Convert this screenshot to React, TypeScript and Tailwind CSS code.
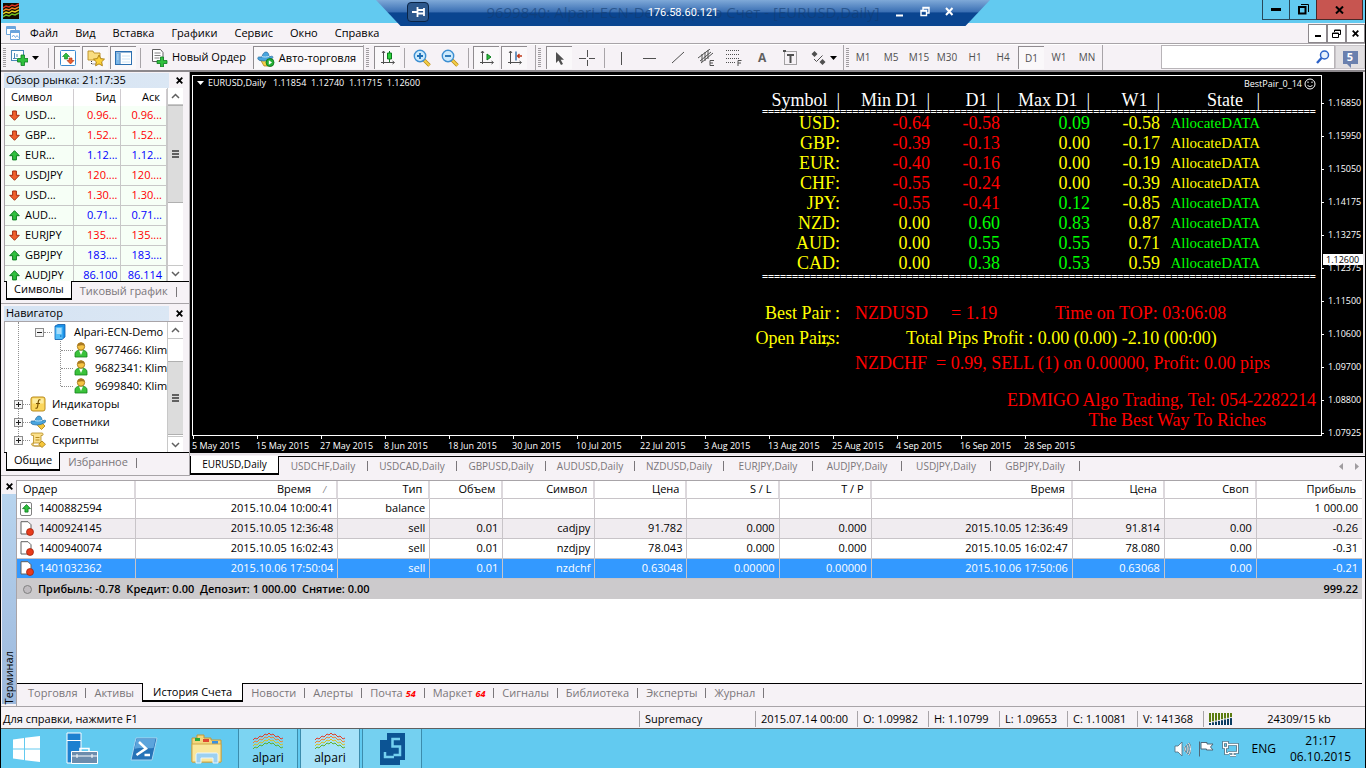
import type { ReactNode } from "react";
import clsx from "clsx";

const menu = ["Файл", "Вид", "Вставка", "Графики", "Сервис", "Окно", "Справка"];
const frames = ["M1", "M5", "M15", "M30", "H1", "H4", "D1", "W1", "MN"];

const quotes = [
  { name: "USD...", bid: "0.96...", ask: "0.96...", up: false },
  { name: "GBP...", bid: "1.52...", ask: "1.52...", up: false },
  { name: "EUR...", bid: "1.12...", ask: "1.12...", up: true },
  { name: "USDJPY", bid: "120....", ask: "120....", up: false },
  { name: "USD...", bid: "1.30...", ask: "1.30...", up: false },
  { name: "AUD...", bid: "0.71...", ask: "0.71...", up: true },
  { name: "EURJPY", bid: "135....", ask: "135....", up: false },
  { name: "GBPJPY", bid: "183....", ask: "183....", up: true },
  { name: "AUDJPY", bid: "86.100", ask: "86.114", up: true },
];

const accounts = ["9677466: Klimenko", "9682341: Klimenko", "9699840: Klimenko"];

const Y = "text-[#ffff00]";
const R = "text-[#ff0000]";
const G = "text-[#00ff00]";

const pairs = [
  { s: "USD:", min: "-0.64", minC: R, d: "-0.58", dC: R, max: "0.09", maxC: G, w: "-0.58", st: G },
  { s: "GBP:", min: "-0.39", minC: R, d: "-0.13", dC: R, max: "0.00", maxC: Y, w: "-0.17", st: Y },
  { s: "EUR:", min: "-0.40", minC: R, d: "-0.16", dC: R, max: "0.00", maxC: Y, w: "-0.19", st: Y },
  { s: "CHF:", min: "-0.55", minC: R, d: "-0.24", dC: R, max: "0.00", maxC: Y, w: "-0.39", st: Y },
  { s: "JPY:", min: "-0.55", minC: R, d: "-0.41", dC: R, max: "0.12", maxC: G, w: "-0.85", st: G },
  { s: "NZD:", min: "0.00", minC: Y, d: "0.60", dC: G, max: "0.83", maxC: G, w: "0.87", st: G },
  { s: "AUD:", min: "0.00", minC: Y, d: "0.55", dC: G, max: "0.55", maxC: G, w: "0.71", st: G },
  { s: "CAD:", min: "0.00", minC: Y, d: "0.38", dC: G, max: "0.53", maxC: G, w: "0.59", st: G },
];

const prices = [
  "1.16850", "1.15950", "1.15050", "1.14175", "1.13275", "1.12375",
  "1.11500", "1.10600", "1.09700", "1.08800", "1.07925",
];

const dates = [
  "5 May 2015", "15 May 2015", "27 May 2015", "8 Jun 2015", "18 Jun 2015", "30 Jun 2015", "10 Jul 2015",
  "22 Jul 2015", "3 Aug 2015", "13 Aug 2015", "25 Aug 2015", "4 Sep 2015", "16 Sep 2015", "28 Sep 2015",
];

const chartTabs = [
  "EURUSD,Daily", "USDCHF,Daily", "USDCAD,Daily", "GBPUSD,Daily", "AUDUSD,Daily",
  "NZDUSD,Daily", "EURJPY,Daily", "AUDJPY,Daily", "USDJPY,Daily", "GBPJPY,Daily",
];

const orderCols = [
  { label: "Ордер", w: "w-[119px]" },
  { label: "Время", w: "w-[202px]" },
  { label: "Тип", w: "w-[92px]" },
  { label: "Объем", w: "w-[73px]" },
  { label: "Символ", w: "w-[92px]" },
  { label: "Цена", w: "w-[92px]" },
  { label: "S / L", w: "w-[92px]" },
  { label: "T / P", w: "w-[92px]" },
  { label: "Время", w: "w-[201px]" },
  { label: "Цена", w: "w-[92px]" },
  { label: "Своп", w: "w-[92px]" },
  { label: "Прибыль", w: "w-[105px]" },
];

const orders = [
  ["1400882594", "2015.10.04 10:00:41", "balance", "", "", "", "", "", "", "", "", "1 000.00"],
  ["1400924145", "2015.10.05 12:36:48", "sell", "0.01", "cadjpy", "91.782", "0.000", "0.000", "2015.10.05 12:36:49", "91.814", "0.00", "-0.26"],
  ["1400940074", "2015.10.05 16:02:43", "sell", "0.01", "nzdjpy", "78.043", "0.000", "0.000", "2015.10.05 16:02:47", "78.080", "0.00", "-0.31"],
  ["1401032362", "2015.10.06 17:50:04", "sell", "0.01", "nzdchf", "0.63048", "0.00000", "0.00000", "2015.10.06 17:50:06", "0.63068", "0.00", "-0.21"],
];

const terminalTabs: { label: string; badge?: string }[] = [
  { label: "Торговля" },
  { label: "Активы" },
  { label: "История Счета" },
  { label: "Новости" },
  { label: "Алерты" },
  { label: "Почта", badge: "54" },
  { label: "Маркет", badge: "64" },
  { label: "Сигналы" },
  { label: "Библиотека" },
  { label: "Эксперты" },
  { label: "Журнал" },
];

function Grip() {
  return (
    <svg width="3" height="20" className="shrink-0" aria-hidden>
      {Array.from({ length: 10 }, (_, i) => (
        <rect key={i} y={i * 2} width="3" height="1" fill="#a09ca0" />
      ))}
    </svg>
  );
}

function Sep() {
  return <div className="mx-1 h-5 w-px shrink-0 bg-[#a8a4a8]" />;
}

function Tool({ label, active, wide, children }: { label: string; active?: boolean; wide?: boolean; children: ReactNode }) {
  return (
    <button
      aria-label={label}
      className={clsx(
        "flex h-[23px] shrink-0 items-center justify-center",
        wide ? "w-[38px]" : "w-[26px]",
        active && "border-t border-l border-[#908c90] bg-[#faf8fa]",
      )}
    >
      {children}
    </button>
  );
}

function Close() {
  return (
    <svg width="7" height="7" viewBox="0 0 7 7" stroke="#000" strokeWidth="1.8">
      <path d="M.7.7l5.6 5.6M6.3.7L.7 6.3" />
    </svg>
  );
}

function Chevron({ down }: { down?: boolean }) {
  return (
    <svg width="9" height="6" viewBox="0 0 9 6" fill="none" stroke="#606060" strokeWidth="1.5">
      <path d={down ? "M1 1l3.5 3.5L8 1" : "M1 5l3.5-3.5L8 5"} />
    </svg>
  );
}

function Scrollbar({ before, thumb }: { before: string; thumb: string }) {
  return (
    <div className="flex w-4 shrink-0 flex-col border-l border-[#c8c8c8] bg-white">
      <button aria-label="Scroll up" className="flex h-[17px] shrink-0 items-center justify-center border-b border-[#c8c8c8]">
        <Chevron />
      </button>
      <div className={before} />
      <div className={clsx("flex flex-col items-center justify-center gap-px border-y border-[#b0b0b0] bg-[#dcdcdc]", thumb)}>
        {[0, 1, 2].map((i) => (
          <div key={i} className="h-0.5 w-[7px] bg-[#606060]" />
        ))}
      </div>
      <div className="flex-1" />
      <button aria-label="Scroll down" className="flex h-4 shrink-0 items-center justify-center border-t border-[#c8c8c8]">
        <Chevron down />
      </button>
    </div>
  );
}

function Arrow({ up, size = 11 }: { up: boolean; size?: number }) {
  return (
    <svg width={size} height={size} viewBox="0 0 11 11" className="shrink-0">
      {up ? (
        <path d="M5.5.7l4.8 5H7.4v4.2H3.6V5.700H.7z" fill="#2fc03c" stroke="#0b7a1e" />
      ) : (
        <path d="M5.5 10.300l4.800-5H7.400V1H3.600v4.300H.7z" fill="#f0602c" stroke="#a52c10" />
      )}
    </svg>
  );
}

function PanelTitle({ children }: { children: ReactNode }) {
  return (
    <div className="flex h-[16px] items-center">
      <h2 className="flex h-[15px] flex-1 items-center bg-linear-to-r from-[#d5e3f3] to-[#dbe7f4] pl-0.5 text-[11px] whitespace-nowrap">{children}</h2>
      <button aria-label="Закрыть" className="flex w-[20px] justify-center">
        <Close />
      </button>
    </div>
  );
}

function PanelTabs({ active, other }: { active: string; other: string }) {
  return (
    <div className="flex h-5 border-t border-black pl-0.5 text-[11px]">
      <button className="-mt-px h-[19px] border-x border-b-2 border-black bg-white px-[7px] text-black">{active}</button>
      <div className="flex items-center">
        <button className="px-2 text-[#7a767a]">{other}</button>
        <div className="h-2.5 w-px bg-[#7a767a]" />
      </div>
    </div>
  );
}

function Hat() {
  return (
    <>
      <path d="M2 7c-2 0-1.500 3 1 3.500 4 1 8 .5 12-2 1.500-1 1-2.500-.5-2.300L12 7c0-3-1-5-3-5S5.500 4 5 7z" fill="#4aa5de" stroke="#22689c" strokeWidth=".7" />
      <path d="M5 6.500c2 .8 5 .6 7-.2" stroke="#bfe4f8" fill="none" />
    </>
  );
}

function TreeIcon({ kind }: { kind: "server" | "user" | "fx" | "hat" | "script" }) {
  return (
    <svg width="16" height="16" viewBox="0 0 16 16" className="shrink-0">
      {kind === "server" && (
        <>
          <path d="M3 2l3-1.500h7V13l-3 2.500H3z" fill="#1c92e8" stroke="#0c5ba8" strokeWidth=".8" />
          <path d="M3.500 3h7v12h-7z" fill="#52bdf8" />
          <path d="M4.500 5h5M4.500 7h5M4.500 9h5" stroke="#fff" />
          <path d="M8 12h1.500" stroke="#0c5ba8" />
        </>
      )}
      {kind === "user" && (
        <>
          <path d="M2 15V12c0-3 3-4 6-4s6 1 6 4v3z" fill="#3bc23b" stroke="#13811b" strokeWidth=".8" />
          <path d="M6 8.500l2 4.500 2-4.500z" fill="#fff" />
          <circle cx="8" cy="4.500" r="3.700" fill="#f6c444" stroke="#9a6b10" strokeWidth=".8" />
          <path d="M4.500 4C5 1.500 6 .6 8 .6S11.500 2 11.600 4C10 2.500 7 4 4.500 4z" fill="#a87820" />
        </>
      )}
      {kind === "fx" && (
        <>
          <rect x="1" y="1" width="14" height="14" rx="2" fill="#fbd65c" stroke="#b98a1d" />
          <rect x="2.500" y="2.500" width="11" height="5" fill="#fdeca0" />
          <path d="M10.500 4C8.500 3 8.300 5 8 8s-.7 5-2.500 4M6 7.500h4" fill="none" stroke="#7a5200" strokeWidth="1.200" />
        </>
      )}
      {kind === "hat" && (
        <>
          <path d="M11 8l4 4-3.500 3.500-4-4z" fill="#f5c63a" stroke="#a87c14" strokeWidth=".8" />
          <Hat />
        </>
      )}
      {kind === "script" && (
        <>
          <path d="M2 1h10c1.500 0 1.500 2.500 0 2.500h-1V11H5c-3 0-2 3 0 3h6H4c-3 0-3-3-1-3h.5V3.500H2C.7 3.500.7 1 2 1z" fill="#fbe08a" stroke="#b58a20" strokeWidth=".8" />
          <path d="M5.500 5.500h4M5.500 8h4" stroke="#b58a20" />
          <path d="M12 9l3.500 3.300L12 15.500l-3.300-3.200z" fill="#f5c63a" stroke="#a87c14" strokeWidth=".8" />
        </>
      )}
    </svg>
  );
}

function Expander({ open }: { open?: boolean }) {
  return (
    <svg width="9" height="9" viewBox="0 0 9 9" className="relative shrink-0">
      <rect x=".5" y=".5" width="8" height="8" fill="#f4f4f4" stroke="#8c8c8c" />
      <path d={open ? "M2 4.500h5" : "M2 4.500h5M4.500 2v5"} stroke="#202020" />
    </svg>
  );
}

function Dash({ w }: { w: string }) {
  return <div className={clsx("h-0 shrink-0 border-t border-dotted border-[#909090]", w)} />;
}

function TitleBar() {
  return (
    <header className="relative flex h-[23px] shrink-0 items-start justify-between bg-[#62caf0]">
      <svg width="16" height="16" viewBox="0 0 16 16" className="mt-[3px] ml-0.5">
        <rect width="16" height="16" fill="#140c00" />
        <g fill="none" strokeWidth="1.500">
          <path d="M0 5l3-2 3 1 3-2 3 1 4-2" stroke="#e03020" />
          <path d="M0 8l3-2 3 1 3-2 3 1 4-2" stroke="#f08020" />
          <path d="M0 11l3-2 3 1 3-2 3 1 4-2" stroke="#e8d020" />
          <path d="M0 14l3-2 3 1 3-2 3 1 4-2" stroke="#70c020" />
        </g>
      </svg>
      <div className="absolute inset-x-0 top-0 z-10 flex justify-center">
        <div className="relative flex h-[26px] w-[614px] items-start bg-linear-to-b from-[#7fa9d8] via-[#3b70b4] via-45% to-[#0a4590] to-50% [clip-path:polygon(0_0,100%_0,96%_100%,4%_100%)]">
          <button aria-label="Закрепить" className="mt-0.5 ml-[31px] flex h-5 w-[22px] items-center justify-center rounded-sm border border-[#0a2446] bg-[#2c578c]">
            <svg width="13" height="10" viewBox="0 0 13 10" stroke="#fff" strokeWidth="1.800" fill="none">
              <path d="M0 5h5M5.500 0v10M6 3h6M6 6.500h6M12 1v8" />
            </svg>
          </button>
          <p className="absolute inset-x-0 top-0 text-center text-[15px] leading-6 whitespace-nowrap text-[#123c70]/60">
            9699840: Alpari-ECN-Demo: Демо Счет - [EURUSD,Daily]
          </p>
          <p className="absolute inset-x-0 top-0 text-center font-['Roboto'] text-[11px] leading-[25px] text-white">176.58.60.121</p>
          <div className="mt-[5px] ml-auto flex gap-[15px] pr-[36px] text-white">
            <svg width="10" height="14" aria-hidden><path d="M1 10.500h7" stroke="#fff" strokeWidth="2" /></svg>
            <svg width="10" height="14" viewBox="0 0 10 14" fill="none" stroke="#fff" strokeWidth="1.400">
              <path d="M3 5V2.500h6V8H7M1 5.500h5.500v5H1zM1 6h5.500M3 3h6" />
            </svg>
            <svg width="9" height="14" viewBox="0 0 9 14" stroke="#fff" strokeWidth="2"><path d="M1 3l6.500 7M7.500 3L1 10" /></svg>
          </div>
        </div>
      </div>
      <div className="mr-0.5 flex h-5">
        <button aria-label="Свернуть" className="flex w-7 items-center justify-center border border-t-0 border-[#28485a]">
          <span className="h-[3px] w-2.5 bg-black" />
        </button>
        <button aria-label="Развернуть" className="flex w-[26px] items-center justify-center border-b border-[#28485a]">
          <svg width="11" height="11" viewBox="0 0 11 11" fill="none" stroke="#000">
            <path d="M1 3h6.500v6.500H1z" strokeWidth="2" />
            <path d="M3 .5h7.500V8" />
          </svg>
        </button>
        <button aria-label="Закрыть" className="flex w-[47px] items-center justify-center border border-t-0 border-[#4a2828] bg-[#c75550]">
          <svg width="9" height="8" viewBox="0 0 9 8" stroke="#000" strokeWidth="2"><path d="M1 .5l7 7M8 .5l-7 7" /></svg>
        </button>
      </div>
    </header>
  );
}

function MenuBar() {
  const box = "flex h-[19px] w-[19px] items-center justify-center border border-[#8c888c] bg-white";
  return (
    <nav className="flex h-[21px] shrink-0 items-center border-b border-[#a8a4a8] text-[11px]">
      <svg width="16" height="16" viewBox="0 0 16 16" fill="#fff" stroke="#6aa4dc" className="mr-[9px] ml-1">
        <path d="M1.500 1.500h9v8h-9z" />
        <path d="M1.500 3h9" strokeWidth="2" />
        <path d="M5.500 5.500h9v9h-9z" />
        <path d="M5.500 7h9" strokeWidth="2" />
        <path d="M7 12l1.500-2 2 2.500 1.500-2 1.500 2" fill="none" strokeWidth=".9" />
      </svg>
      <div className="flex gap-[17px]">
        {menu.map((m) => (
          <button key={m}>{m}</button>
        ))}
      </div>
      <div className="ml-auto flex">
        <button aria-label="Свернуть окно" className={box}><span className="mt-1.5 h-0.5 w-1.5 bg-black" /></button>
        <button aria-label="Восстановить окно" className={box}>
          <svg width="9" height="9" viewBox="0 0 9 9" fill="none" stroke="#000"><path d="M2.500 3V1h6v4.500H7M.5 4h6v4.500h-6zM.5 4.500h6M2.500 1.500h6" /></svg>
        </button>
        <button aria-label="Закрыть окно" className={box}><Close /></button>
      </div>
    </nav>
  );
}

function Axes({ children }: { children: ReactNode }) {
  return (
    <svg width="16" height="16" viewBox="0 0 16 16" fill="none" stroke="#505050">
      <path d="M3.500 1v13M1 12.500h13M2 3l1.500-2L5 3M12.500 11l2 1.500-2 1.500" />
      {children}
    </svg>
  );
}

function Lens({ plus }: { plus?: boolean }) {
  return (
    <svg width="18" height="18" viewBox="0 0 18 18">
      <path d="M11 11l5.500 5.500" stroke="#b88a18" strokeWidth="3.500" />
      <path d="M11 11l5.500 5.500" stroke="#f5cf48" strokeWidth="2" />
      <circle cx="7" cy="7" r="5.700" fill="#cdeafc" stroke="#3c8fd2" strokeWidth="1.400" />
      <path d={plus ? "M4 7h6M7 4v6" : "M4 7h6"} stroke="#1f6fb5" strokeWidth="1.800" />
    </svg>
  );
}

function Caret() {
  return <svg width="7" height="4" className="ml-1"><path d="M0 0h7L3.500 4z" fill="#000" /></svg>;
}

const group = "flex shrink-0 items-center border-r border-[#a8a4a8] pl-0.5";

function ToolBar() {
  return (
    <div className="flex h-[28px] shrink-0 items-stretch border-t border-b-2 border-t-white border-b-[#8c888c] text-[11px]">
      <div className={group}>
        <Grip />
        <Tool label="Новый график" wide>
          <svg width="17" height="17" viewBox="0 0 17 17">
            <rect x=".5" y="1.500" width="12" height="10" fill="#fff" stroke="#4a88b8" />
            <path d="M3.500 4v5M6 5v3M2 9.500h4" stroke="#4a88b8" />
            <path d="M10 6h3.500v3.500H17v3.500h-3.500v3.500H10V13H6.500V9.500H10z" fill="#2fc03c" stroke="#0b7a1e" strokeWidth=".8" />
          </svg>
          <Caret />
        </Tool>
        <Sep />
        <div className="ml-px flex gap-0.5">
          <Tool label="Обзор рынка" active>
            <svg width="16" height="16" viewBox="0 0 16 16">
              <rect x=".5" y=".5" width="15" height="15" rx="1" fill="#fff" stroke="#3a8ad0" />
              <path d="M6 3l3.500 3.500h-2V9h-3V6.500h-2z" fill="#2fc03c" stroke="#0b7a1e" strokeWidth=".6" />
              <path d="M10.500 14L7 10.500h2V8h3v2.500h2z" fill="#f0602c" stroke="#a52c10" strokeWidth=".6" />
            </svg>
          </Tool>
          <Tool label="Навигатор" active>
            <svg width="18" height="18" viewBox="0 0 18 18">
              <path d="M1 2h5l1 2h6v7H1z" fill="#f9dd80" stroke="#b98d22" strokeWidth=".9" />
              <path d="M4.500 12v3h4" fill="none" stroke="#404040" strokeDasharray="1 1" />
              <path d="M12 6l1.700 3.600 3.800.5-2.800 2.700.7 4L12 14.900l-3.400 1.900.7-4-2.800-2.700 3.800-.5z" fill="#fbd038" stroke="#a87a10" strokeWidth=".9" />
            </svg>
          </Tool>
          <Tool label="Терминал" active>
            <svg width="17" height="16" viewBox="0 0 17 16">
              <rect x=".5" y="1.500" width="16" height="13" fill="#fff" stroke="#2c6fb0" />
              <path d="M1 2h15" stroke="#2c6fb0" />
              <path d="M1 3h3.500v11H1z" fill="#79b6e8" />
              <path d="M5 3v11" stroke="#2c6fb0" />
              <path d="M2 5h1.500M2 7h1.500M2 9h1.500M7 6h8M7 9h8M7 12h8" stroke="#cfe4f6" />
            </svg>
          </Tool>
        </div>
        <Sep />
        <button className="flex h-[23px] items-center gap-1 pr-[7px] pl-[6px] whitespace-nowrap">
          <svg width="17" height="18" viewBox="0 0 17 18">
            <path d="M1.500.5h8l2.500 3v9H1.500z" fill="#fff" stroke="#606060" />
            <path d="M3.500 4h6M3.500 6.500h6M3.500 9h5" stroke="#808080" />
            <path d="M9.500 8h3v3.500H16v3h-3.500V18h-3v-3.500H6v-3h3.500z" fill="#2fc03c" stroke="#0b7a1e" strokeWidth=".8" />
          </svg>
          Новый Ордер
        </button>
        <button className="flex h-[23px] items-center gap-1 border-t border-l border-[#908c90] bg-[#faf8fa] pr-[7px] pl-[3px] whitespace-nowrap">
          <svg width="18" height="17" viewBox="0 0 18 17">
            <path d="M3 9l4 7h8V8z" fill="#f5cf48" stroke="#a87c14" strokeWidth=".7" />
            <Hat />
            <circle cx="13" cy="12.500" r="4" fill="#24b035" stroke="#0a7018" strokeWidth=".8" />
            <path d="M11.800 10.300l3.200 2.200-3.200 2.200z" fill="#fff" />
          </svg>
          Авто-торговля
        </button>
      </div>
      <div className={clsx(group, "pr-2")}>
        <Grip />
        <div className="w-[5px]" />
        <Tool label="Свечи" active>
          <Axes>
            <path d="M9.500 1v11" stroke="#0b7a1e" />
            <path d="M7.500 3h4v6h-4z" fill="#2fd03c" stroke="#0b7a1e" />
          </Axes>
        </Tool>
        <Sep />
        <Tool label="Увеличить"><Lens plus /></Tool>
        <div className="w-0.5" />
        <Tool label="Уменьшить"><Lens /></Tool>
        <div className="w-px" />
        <Sep />
        <Tool label="Автопрокрутка" active>
          <Axes><path d="M8 4l4 3-4 3z" fill="#2fc03c" stroke="#0b7a1e" /></Axes>
        </Tool>
        <div className="w-0.5" />
        <Tool label="Сдвиг графика" active>
          <Axes>
            <path d="M9 1.500v9" stroke="#2060a0" strokeWidth="1.300" />
            <path d="M15 6h-4M12.500 4L10.500 6l2 2" stroke="#c03818" strokeWidth="1.300" />
          </Axes>
        </Tool>
      </div>
      <div className={group}>
        <Grip />
        <div className="w-[5px]" />
        <Tool label="Курсор" active>
          <svg width="12" height="15"><path d="M2 1v11l2.500-2.500L7 14l2-1-2.300-4.300H10z" fill="#505050" /></svg>
        </Tool>
        <div className="w-0.5" />
        <Tool label="Перекрестие">
          <svg width="16" height="16" stroke="#505050"><path d="M8.500 0v7M8.500 10v6M0 8.500h7M10 8.500h6" /></svg>
        </Tool>
        <Sep />
        <div className="flex gap-0.5">
          <Tool label="Вертикальная линия"><svg width="12" height="14" stroke="#505050"><path d="M5.500 1v13" /></svg></Tool>
          <Tool label="Горизонтальная линия"><svg width="14" height="12" stroke="#505050"><path d="M0 6.500h13" /></svg></Tool>
          <Tool label="Трендовая линия"><svg width="14" height="14" stroke="#505050"><path d="M1 12L13 1" /></svg></Tool>
          <Tool label="Канал">
            <svg width="17" height="17" viewBox="0 0 17 17" stroke="#505050" fill="none">
              <path d="M0 9L12 0M3 14L15 4M2 12l11-9M4 5v8M7 3v9M10 1v9" />
              <path d="M16 11.500h-4v5h4M12 14h3" />
            </svg>
          </Tool>
          <Tool label="Фибоначчи">
            <svg width="16" height="17" viewBox="0 0 16 17" stroke="#505050" fill="none">
              <path d="M0 1.500h14M0 5.500h14M0 9.500h14M0 13.500h9" strokeDasharray="1 1" />
              <path d="M15.500 11.500H12V17M12 14h3" />
            </svg>
          </Tool>
          <Tool label="Текст"><span className="text-[12px] font-bold text-[#606060]">A</span></Tool>
          <Tool label="Метка">
            <svg width="15" height="16" viewBox="0 0 15 16" fill="none" stroke="#505050">
              <rect x="1.500" y="1.500" width="12" height="13" strokeDasharray="1 1" />
              <path d="M4 5h7M7.500 5v8" strokeWidth="2" />
              <path d="M0 1h3" strokeWidth="2" />
            </svg>
          </Tool>
          <Tool label="Стрелки" wide>
            <svg width="15" height="14" viewBox="0 0 15 14" fill="#505050">
              <path d="M3.500 0l3 3-3 3-3-3zM11.500 8l3 3-3 3-3-3z" />
              <path d="M3 8l2.500 2.500 6-6" fill="none" stroke="#505050" />
            </svg>
            <Caret />
          </Tool>
        </div>
      </div>
      <div className={clsx(group, "text-[10px] text-[#505050]")}>
        <Grip />
        <div className="ml-px flex gap-0.5">
          {frames.map((f) => (
            <Tool key={f} label={f} active={f === "D1"}>{f}</Tool>
          ))}
        </div>
        <div className="w-0.5" />
      </div>
      <div className="ml-auto flex h-6 items-center">
        <label className="flex h-6 w-[174px] items-center border border-[#b8b4b8] bg-white">
          <input type="search" aria-label="Поиск" className="min-w-0 flex-1 outline-none" />
          <svg width="14" height="14" viewBox="0 0 14 14" fill="none" stroke="#2c62c8" className="mr-1">
            <circle cx="8.500" cy="5" r="4" strokeWidth="1.500" fill="#e6f0fc" />
            <path d="M5.500 8L1 13" strokeWidth="2.400" />
          </svg>
        </label>
        <button aria-label="Сообщения" className="flex h-6 w-[30px] items-center justify-center border border-[#c8c4c8] bg-[#e2e0e2]">
          <span className="relative flex h-[13px] w-[15px] items-center justify-center bg-[#6a80ae] text-[11px] font-bold text-white after:absolute after:top-full after:left-1 after:border-t-4 after:border-l-4 after:border-t-[#6a80ae] after:border-l-transparent">5</span>
        </button>
      </div>
    </div>
  );
}

function MarketWatch() {
  const head = "border-r border-[#d0ccd0] font-normal";
  const cell = "border-r border-b border-[#c8c8c8] p-0";
  return (
    <section className="flex flex-col pl-[3px]">
      <PanelTitle>Обзор рынка: 21:17:35</PanelTitle>
      <div className="mr-1.5 flex h-[193px] overflow-hidden border-l border-[#a8a4a8] bg-white">
        <div className="flex-1 pt-px">
          <table className="w-full table-fixed border-separate border-spacing-0 text-[11px]">
            <thead>
              <tr className="h-[17px]">
                <th className={clsx(head, "w-[69px] pl-1.5 text-left")}>Символ</th>
                <th className={clsx(head, "pr-1 text-right")}>Бид</th>
                <th className={clsx(head, "pr-1.5 text-right")}>Аск</th>
              </tr>
            </thead>
            <tbody>
              {quotes.map((q, i) => (
                <tr key={i} className={clsx("h-5 bg-[#f6fff6]", q.up ? "text-[#0000ff]" : "text-[#ff0000]")}>
                  <td className={cell}>
                    <div className="flex items-center gap-[5px] pl-1 text-black">
                      <Arrow up={q.up} />
                      {q.name}
                    </div>
                  </td>
                  <td className={clsx(cell, "pr-0.5 text-right")}>{q.bid}</td>
                  <td className={clsx(cell, "pr-1 text-right")}>{q.ask}</td>
                </tr>
              ))}
            </tbody>
          </table>
        </div>
        <Scrollbar before="h-0" thumb="h-[98px]" />
      </div>
      <PanelTabs active="Символы" other="Тиковый график" />
    </section>
  );
}

function Navigator() {
  const row = "relative flex h-[18px] items-center whitespace-nowrap";
  return (
    <section className="flex flex-1 flex-col pl-[3px]">
      <PanelTitle>Навигатор</PanelTitle>
      <div className="mr-1.5 flex h-[131px] border-t border-l border-[#a8a4a8] bg-white">
        <div className="relative flex-1 overflow-hidden pt-px text-[11px]">
          <div className="absolute top-0 left-[13px] h-[120px] border-l border-dotted border-[#909090]" />
          <div className={clsx(row, "pl-[30px]")}>
            <Expander open />
            <Dash w="w-2" />
            <TreeIcon kind="server" />
            <span className="ml-1.5">Alpari-ECN-Demo</span>
          </div>
          <div className="relative">
            <div className="absolute top-0 left-[55px] h-[45px] border-l border-dotted border-[#909090]" />
            {accounts.map((a) => (
              <div key={a} className={clsx(row, "pl-[56px]")}>
                <Dash w="w-3" />
                <TreeIcon kind="user" />
                <span className="ml-1.5">{a}</span>
              </div>
            ))}
          </div>
          {(["fx", "hat", "script"] as const).map((kind, i) => (
            <div key={kind} className={clsx(row, "pl-[9px]")}>
              <Expander />
              <Dash w="w-[7px]" />
              <TreeIcon kind={kind} />
              <span className="ml-1.5">{["Индикаторы", "Советники", "Скрипты"][i]}</span>
            </div>
          ))}
        </div>
        <Scrollbar before="h-[22px]" thumb="h-[74px]" />
      </div>
      <PanelTabs active="Общие" other="Избранное" />
    </section>
  );
}

function Rule() {
  return (
    <div className="-my-1 text-left font-['DejaVu_Sans_Mono'] text-[10px] leading-[11px] text-white">{"=".repeat(92)}</div>
  );
}

function PairTable() {
  return (
    <table className="w-[558px] table-fixed border-separate border-spacing-0 text-[18px] leading-5">
      <thead className="text-white">
        <tr>
          {["Symbol", "Min D1", "D1", "Max D1", "W1", "State"].map((h, i) => (
            <th key={h} className={clsx("p-0 text-right font-normal whitespace-pre", ["w-[78px]", "w-[90px]", "w-[70px]", "w-[90px]", "w-[70px]", "w-[100px]"][i])}>
              {h}{i === 5 ? "   |" : "  |"}
            </th>
          ))}
          <th className="p-0" />
        </tr>
        <tr>
          <td colSpan={7} className="p-0"><Rule /></td>
        </tr>
      </thead>
      <tbody className="text-right text-[#ffff00]">
        {pairs.map((p) => (
          <tr key={p.s}>
            <td className="p-0">{p.s}</td>
            <td className={clsx("p-0", p.minC)}>{p.min}</td>
            <td className={clsx("p-0", p.dC)}>{p.d}</td>
            <td className={clsx("p-0", p.maxC)}>{p.max}</td>
            <td className="p-0">{p.w}</td>
            <td className={clsx("p-0 text-[15px]", p.st)}>AllocateDATA</td>
            <td className="p-0" />
          </tr>
        ))}
        <tr>
          <td colSpan={7} className="p-0 pt-0.5 pb-px"><Rule /></td>
        </tr>
      </tbody>
    </table>
  );
}

function Chart() {
  return (
    <section className="flex min-w-0 flex-1 flex-col">
      <div className="flex flex-1 flex-col border-r-2 border-b-2 border-[#e8e4e8] bg-black pt-[3px] pl-0.5 text-[9px] text-white">
        <div className="flex flex-1">
          <div className="flex flex-1 justify-between border border-white">
            <div className="mt-px ml-1 flex h-3 items-center gap-1 whitespace-pre">
              <svg width="7" height="4"><path d="M0 0h7L3.500 4z" fill="#fff" /></svg>
              <span>EURUSD,Daily   1.11854  1.12740  1.11715  1.12600</span>
            </div>
            <div className="flex flex-col items-end pr-px font-['Liberation_Serif'] text-[18px] leading-[25px] whitespace-pre">
              <div className="mt-0.5 flex h-3 items-center gap-0.5 pr-1 font-['Open_Sans'] text-[9px] leading-3">
                BestPair_0_14
                <svg width="12" height="12" viewBox="0 0 12 12" fill="none" stroke="#fff">
                  <circle cx="6" cy="6" r="5" />
                  <path d="M3.500 7c1 2 4 2 5 0M4 3.500v1.500M8 3.500v1.500" />
                </svg>
              </div>
              <PairTable />
              <div className="mt-[22px] grid w-[568px] grid-cols-[88px_1fr] text-[#ff0000]">
                <span className="text-right text-[#ffff00]">Best Pair :</span>
                <div className="flex pl-[15px]">
                  <span className="w-[96px]">NZDUSD</span>
                  <span className="w-[104px]">= 1.19</span>
                  <span>Time on TOP: 03:06:08</span>
                </div>
                <span className="relative text-right text-[#ffff00]">
                  Open Pairs:
                  <span className="absolute right-[10px]">:,</span>
                </span>
                <span className="pl-[66px] text-[#ffff00]">Total Pips Profit : 0.00 (0.00) -2.10 (00:00)</span>
                <span className="col-start-2 pl-[15px]">NZDCHF  = 0.99, SELL (1) on 0.00000, Profit: 0.00 pips</span>
              </div>
              <div className="mt-[14px] pr-1 text-right leading-5 text-[#ff0000]">
                <p>EDMIGO Algo Trading, Tel: 054-2282214</p>
                <p className="pr-[50px]">The Best Way To Riches</p>
              </div>
            </div>
          </div>
          <div className="relative w-[41px] pt-[22px]">
            {prices.map((p) => (
              <div key={p} className="h-[33px] last-of-type:-mb-1 last-of-type:h-3">
                <div className="flex h-3 items-center leading-3">
                  <span className="mr-1 h-px w-0.5 bg-white" />
                  {p}
                </div>
              </div>
            ))}
            <span className="absolute top-[179px] left-px h-[11px] w-10 bg-white pl-[3px] leading-[11px] text-black">1.12600</span>
          </div>
        </div>
        <div className="flex h-[17px] overflow-hidden">
          {dates.map((d) => (
            <div key={d} className="w-16 shrink-0 whitespace-nowrap">
              <div className="ml-px h-[3px] w-px bg-white" />
              <div className="leading-[13px]">{d}</div>
            </div>
          ))}
        </div>
      </div>
      <div className="mt-px flex h-[20px] shrink-0 border-t border-black text-[10px] text-[#7a767a]">
        {chartTabs.map((t, i) =>
          i === 0 ? (
            <button key={t} className="-mt-px h-[19px] w-[89px] border border-t-0 border-b-2 border-black bg-white text-black">{t}</button>
          ) : (
            <div key={t} className="flex h-[18px] items-center">
              <button className="w-[88px] text-center">{t}</button>
              <div className="h-2.5 w-px bg-[#7a767a]" />
            </div>
          ),
        )}
        <div className="mr-1.5 ml-auto flex items-center gap-3">
          <svg width="4" height="7"><path d="M4 0v7L0 3.500z" fill="#a09ca0" /></svg>
          <svg width="4" height="7"><path d="M0 0v7l4-3.500z" fill="#a09ca0" /></svg>
        </div>
      </div>
    </section>
  );
}

function OrderIcon({ balance }: { balance: boolean }) {
  if (balance)
    return (
      <span className="flex h-[14px] w-3 items-center justify-center rounded-xs border border-[#808080] bg-white">
        <Arrow up size={9} />
      </span>
    );
  return (
    <svg width="14" height="15" viewBox="0 0 14 15">
      <path d="M1 .7h7l3 3V13H1z" fill="#fff" stroke="#606060" />
      <circle cx="10" cy="11" r="3.500" fill="#e83c1c" stroke="#9a1c08" strokeWidth=".7" />
    </svg>
  );
}

function Terminal() {
  return (
    <section className="flex min-h-[230px] flex-1 border-b border-[#a8a4a8] pt-1 text-[11px]">
      <div className="flex w-[15px] shrink-0 flex-col items-center pl-px">
        <button aria-label="Закрыть терминал" className="flex h-3 items-center"><Close /></button>
        <div className="mt-0.5 mb-0.5 flex w-full flex-1 items-center justify-end bg-linear-to-b from-[#b8d4ee] to-[#9cb8dc] [writing-mode:vertical-rl]">
          <span className="rotate-180 py-0.5 leading-[14px]">Терминал</span>
        </div>
      </div>
      <div className="mr-[3px] flex min-w-0 flex-1 flex-col border-t border-l border-[#a8a4a8] bg-white">
        <table className="w-full table-fixed border-separate border-spacing-0">
          <thead>
            <tr className="h-[18px]">
              {orderCols.map((c, i) => (
                <th
                  key={i}
                  className={clsx("border-b border-[#c8c4c8] p-0 font-normal", c.w, i === 0 ? "pl-1.5 text-left" : "pr-1.5 text-right", i < 11 && "border-r-2 border-r-[#dcd8dc]")}
                >
                  {c.label}
                  {i === 1 && <span className="mr-1 ml-3 text-[9px] text-[#808080] italic">/</span>}
                </th>
              ))}
            </tr>
          </thead>
          <tbody>
            {orders.map((o, r) => (
              <tr key={o[0]} className={clsx("h-5", r === 3 ? "bg-[#3399ff] text-white" : r === 1 ? "bg-[#f0ecf0]" : "bg-white")}>
                {o.map((v, i) => (
                  <td
                    key={i}
                    className={clsx("border-b border-[#c8c4c8] p-0 whitespace-nowrap", i === 0 ? "pl-[3px]" : "pr-1 text-right", i < 11 && "border-r")}
                  >
                    {i === 0 ? (
                      <div className="flex items-center">
                        <span className="w-[19px]"><OrderIcon balance={r === 0} /></span>
                        {v}
                      </div>
                    ) : (
                      v
                    )}
                  </td>
                ))}
              </tr>
            ))}
          </tbody>
          <tfoot>
            <tr className="h-5 bg-[#cccacc] font-semibold">
              <td colSpan={11} className="p-0 pl-1.5">
                <div className="flex items-center gap-1.5 whitespace-pre">
                  <span className="size-[9px] rounded-full border border-[#808080] bg-[#c0bcc0]" />
                  Прибыль: -0.78  Кредит: 0.00  Депозит: 1 000.00  Снятие: 0.00
                </div>
              </td>
              <td className="p-0 pr-1 text-right">999.22</td>
            </tr>
          </tfoot>
        </table>
        <div className="flex-1" />
        <div className="flex h-[23px] items-start border-t border-black bg-[#f6f2f6] pl-[3px] text-[#7a767a]">
          {terminalTabs.map((t, i) =>
            i === 2 ? (
              <button key={t.label} className="-mt-px h-[19px] border-x border-b-2 border-black bg-white px-2.5 leading-4 whitespace-nowrap text-black">{t.label}</button>
            ) : (
              <div key={t.label} className="flex h-[18px] items-center">
                <button className="px-2 whitespace-nowrap">
                  {t.label}
                  {t.badge && <sub className="bottom-0 ml-[3px] text-[9px] font-bold text-[#ff0000] italic">{t.badge}</sub>}
                </button>
                {i !== 1 && <div className="h-2.5 w-px bg-[#7a767a]" />}
              </div>
            ),
          )}
        </div>
      </div>
    </section>
  );
}

function StatusBar() {
  const cell = "flex h-4 items-center border-l border-[#a8a4a8] pl-[5px]";
  return (
    <div className="flex h-[22px] shrink-0 items-center border-b border-[#606060] pt-[3px] pl-0.5 text-[11px] whitespace-nowrap">
      <span className="flex-1">Для справки, нажмите F1</span>
      <span className={clsx(cell, "w-[116px]")}>Supremacy</span>
      <span className={clsx(cell, "w-[102px]")}>2015.07.14 00:00</span>
      <span className={clsx(cell, "w-[71px]")}>O: 1.09982</span>
      <span className={clsx(cell, "w-[71px]")}>H: 1.10799</span>
      <span className={clsx(cell, "w-[68px]")}>L: 1.09653</span>
      <span className={clsx(cell, "w-[70px]")}>C: 1.10081</span>
      <span className={clsx(cell, "w-[66px]")}>V: 141368</span>
      <span className={cell}>
        <svg width="24" height="12">
          {Array.from({ length: 8 }, (_, i) => (
            <g key={i}>
              <rect x={i * 3} width="2" height={9 - i * 0.7} fill="#5c7c10" />
              <rect x={i * 3} y={10 - i * 0.7} width="2" height={2 + i * 0.7} fill="#0c3c60" />
            </g>
          ))}
        </svg>
      </span>
      <span className="w-[132px] text-center">24309/15 kb</span>
    </div>
  );
}

function Alpari() {
  return (
    <span className="flex flex-col items-center">
      <svg width="30" height="18" viewBox="0 0 30 18" fill="none" strokeWidth="1">
        {["#e03c28", "#f08030", "#d8c020", "#60b030"].map((c, i) => (
          <path key={c} stroke={c} transform={`translate(0 ${i * 3})`} d="M0 8l2-2 2 1 3-3 2 1 3-3 2 1 2-2 2 2 2-1 3 3 2-1 3 3 2-1 2 2" />
        ))}
      </svg>
      <span className="text-[12px] leading-4">alpari</span>
    </span>
  );
}

function TaskBar() {
  const app = "flex h-full w-[60px] items-center justify-center border-x border-[#3c8cac]";
  return (
    <footer className="flex h-[39px] shrink-0 items-center bg-[#62caf0]">
      <button aria-label="Пуск" className="flex w-[50px] justify-center">
        <svg width="27" height="26" viewBox="0 0 27 26" fill="#fff">
          <path d="M0 3.500L11 2v10.500H0zM12 1.800L27 0v12.500H12zM0 13.500h11V24L0 22.500zM12 13.500h15V26l-15-1.800z" />
        </svg>
      </button>
      <button aria-label="Диспетчер серверов" className="flex w-[62px] justify-center">
        <svg width="32" height="33" viewBox="0 0 32 33">
          <path d="M1 1h14v30H1z" fill="#1c80d0" stroke="#fff" />
          <path d="M1 8.500h14" stroke="#fff" />
          <path d="M14 19v-2.500h9V19" fill="none" stroke="#fff" strokeWidth="1.500" />
          <path d="M5.500 19.500h26v12h-26z" fill="#6c8cac" stroke="#fff" />
          <path d="M6 24h25M11 22v4M26 22v4" stroke="#fff" />
        </svg>
      </button>
      <button aria-label="PowerShell" className="flex w-[62px] justify-center">
        <svg width="28" height="24" viewBox="0 0 28 24">
          <path d="M6 1h21l-5 22H1z" fill="#2673b8" stroke="#a8d4f0" />
          <path d="M6.500 2h19l-2 9C17 12 10 10 4.500 12z" fill="#5ca4dc" />
          <path d="M9 5l7 6.500L6.500 18M14.500 18H20" fill="none" stroke="#fff" strokeWidth="2.500" />
        </svg>
      </button>
      <button aria-label="Проводник" className="flex w-[63px] justify-center">
        <svg width="32" height="30" viewBox="0 0 32 30">
          <path d="M1 4h5V1h7v3h7v2h10v22H1z" fill="#f3d67c" stroke="#c09838" />
          <path d="M4 4h5v3H4z" fill="#28a838" />
          <path d="M12 5h6v3h-6z" fill="#e04830" />
          <path d="M21 7h6v3h-6z" fill="#3890e0" />
          <path d="M1 10h29v18H1z" fill="#fae79c" stroke="#d0a848" />
          <path d="M5 29v-8c0-1.500 1-2 2-2h18c1 0 2 .5 2 2v8h-5v-5H10v5z" fill="#9cd0f0" stroke="#e8f6ff" />
        </svg>
      </button>
      <div className="flex h-full gap-0.5">
        <button className={clsx(app, "bg-[#7cd4f2]")}><Alpari /></button>
        <button className={clsx(app, "bg-[#a6e2f8]")}><Alpari /></button>
        <button aria-label="S" className={clsx(app, "bg-[#74d0f0]")}>
          <svg width="25" height="32" viewBox="0 0 25 32">
            <path d="M7 0h18v27h-5v5H0V7h7z" fill="#0c5494" />
            <path d="M20 6h-7.500v7.500H20V22H13.500M5 19v5h9" fill="none" stroke="#74d0f0" strokeWidth="2.500" />
          </svg>
        </button>
      </div>
      <div className="ml-auto flex items-center text-[12px]">
        <div className="flex gap-[7px]">
          <svg width="17" height="16" viewBox="0 0 17 16" fill="none" stroke="#fff">
            <path d="M1 5h3l4-4v14l-4-4H1z" fill="#fff" stroke="#506878" strokeWidth=".8" />
            <path d="M10.500 5.500c1 1.500 1 3.500 0 5M12.500 3.500c2 2.500 2 6.500 0 9M14.500 2c2.500 3.500 2.500 8.500 0 12" stroke="#506878" strokeWidth="2" />
            <path d="M10.500 5.500c1 1.500 1 3.500 0 5M12.500 3.500c2 2.500 2 6.500 0 9M14.500 2c2.500 3.500 2.500 8.500 0 12" />
          </svg>
          <svg width="17" height="16" viewBox="0 0 17 16">
            <path d="M1.500.5v15M3 1.500h6v1.500h6l-2.500 3 2.500 3H8.500V8H3z" fill="#fff" stroke="#506878" />
          </svg>
          <svg width="17" height="16" viewBox="0 0 17 16" fill="none">
            <path d="M6 3.500h9.500v8H6M8 14.500h6M11 12v2.500M1.500 1.500h4v5h-4zM3.500 7v5.500H7" stroke="#405868" strokeWidth="2.600" />
            <path d="M6 3.500h9.500v8H6M8 14.500h6M11 12v2.500M1.500 1.500h4v5h-4zM3.500 7v5.500H7" stroke="#fff" strokeWidth="1.300" />
          </svg>
        </div>
        <span className="ml-[13px]">ENG</span>
        <div className="w-[89px] text-center leading-4">
          <p>21:17</p>
          <p>06.10.2015</p>
        </div>
      </div>
    </footer>
  );
}

export default function App() {
  return (
    <div className="flex min-h-screen w-full flex-col border-x border-black bg-[#f6f2f6] font-['Open_Sans','Noto_Sans',sans-serif] text-black">
      <TitleBar />
      <MenuBar />
      <ToolBar />
      <main className="flex h-[404px] shrink-0">
        <aside className="flex w-[189px] shrink-0 flex-col border-r border-b border-[#a8a4a8]">
          <MarketWatch />
          <div className="mt-0.5 mb-px border-t border-[#a8a4a8]" />
          <Navigator />
        </aside>
        <Chart />
      </main>
      <Terminal />
      <StatusBar />
      <TaskBar />
    </div>
  );
}
